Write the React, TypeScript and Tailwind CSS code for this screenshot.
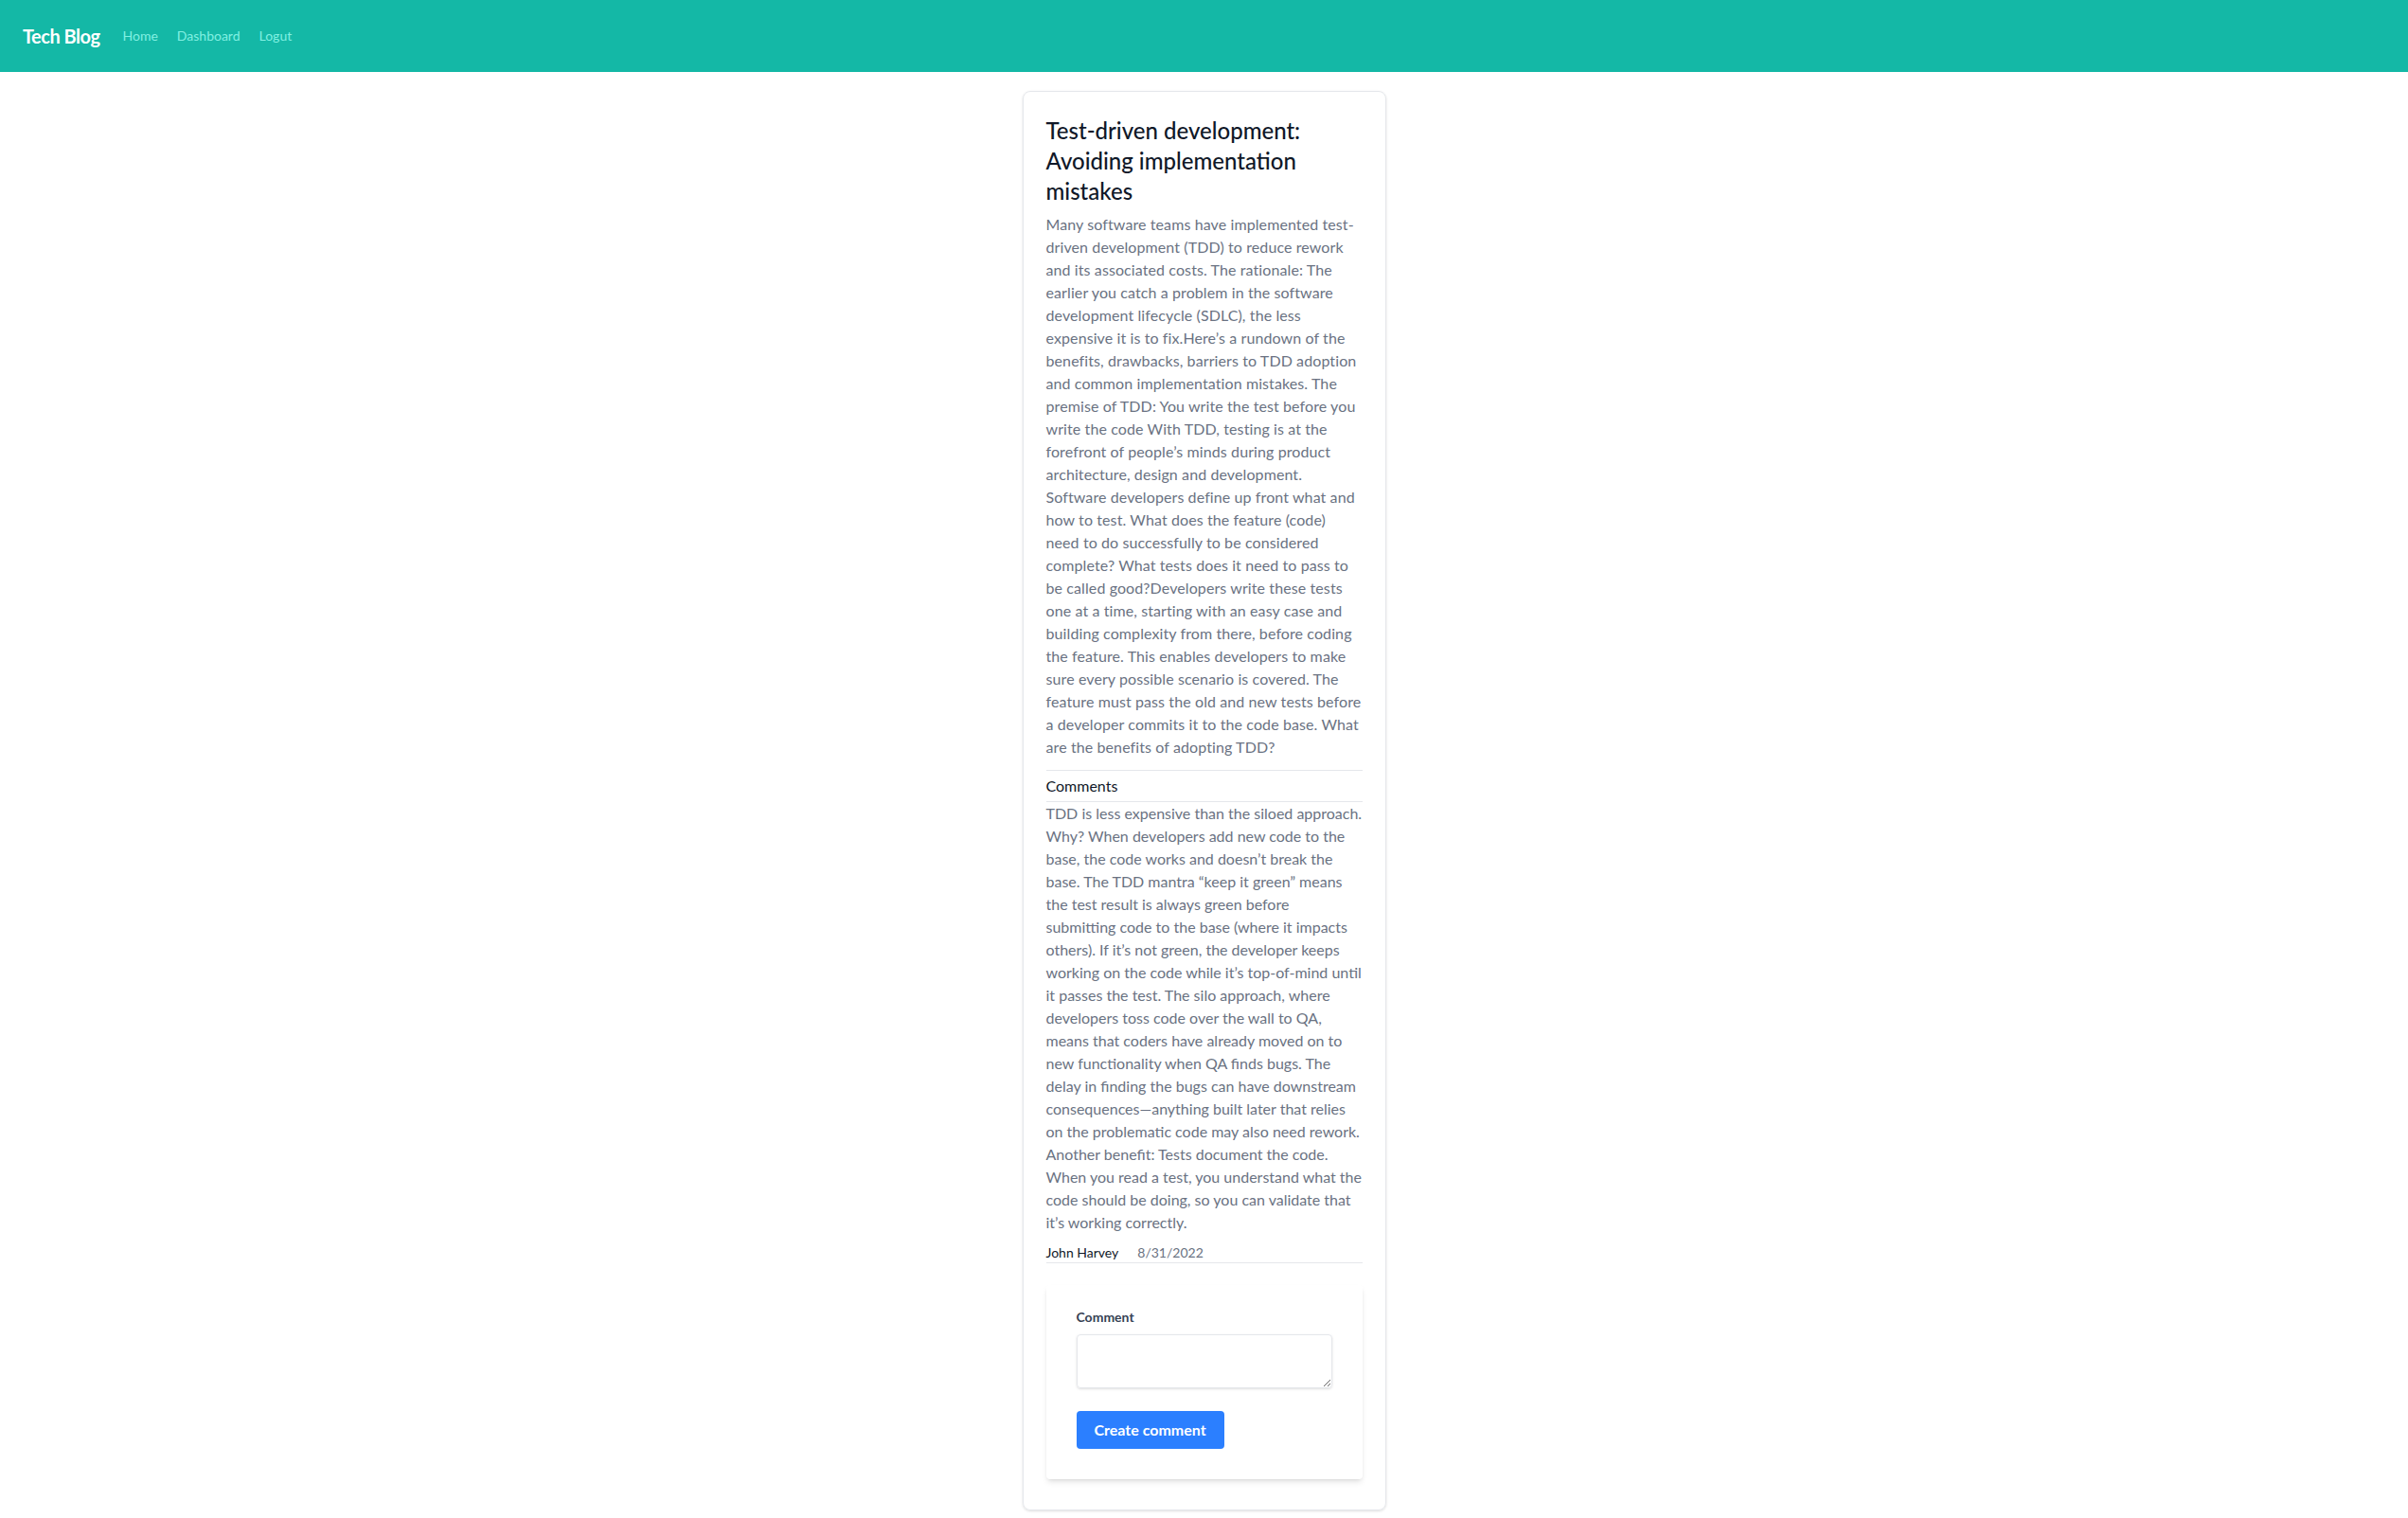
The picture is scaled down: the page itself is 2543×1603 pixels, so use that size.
import React from 'react';

const post = {
  title: 'Test-driven development: Avoiding implementation mistakes',
  body:
    "Many software teams have implemented test-driven development (TDD) to reduce rework and its associated costs. The rationale: The earlier you catch a problem in the software development lifecycle (SDLC), the less expensive it is to fix.Here\u2019s a rundown of the benefits, drawbacks, barriers to TDD adoption and common implementation mistakes. The premise of TDD: You write the test before you write the code With TDD, testing is at the forefront of people\u2019s minds during product architecture, design and development. Software developers define up front what and how to test. What does the feature (code) need to do successfully to be considered complete? What tests does it need to pass to be called good?Developers write these tests one at a time, starting with an easy case and building complexity from there, before coding the feature. This enables developers to make sure every possible scenario is covered. The feature must pass the old and new tests before a developer commits it to the code base. What are the benefits of adopting TDD?",
};

const comments = [
  {
    id: 1,
    text:
      "TDD is less expensive than the siloed approach. Why? When developers add new code to the base, the code works and doesn\u2019t break the base. The TDD mantra \u201ckeep it green\u201d means the test result is always green before submitting code to the base (where it impacts others). If it\u2019s not green, the developer keeps working on the code while it\u2019s top-of-mind until it passes the test. The silo approach, where developers toss code over the wall to QA, means that coders have already moved on to new functionality when QA finds bugs. The delay in finding the bugs can have downstream consequences\u2014anything built later that relies on the problematic code may also need rework. Another benefit: Tests document the code. When you read a test, you understand what the code should be doing, so you can validate that it\u2019s working correctly.",
    author: 'John Harvey',
    date: '8/31/2022',
  },
];

function Navbar() {
  return (
    <nav className="flex items-center bg-[#14b8a6] px-6 py-6">
      <a href="#" className="text-xl font-bold leading-7 tracking-tight text-white">
        Tech Blog
      </a>
      <div className="ml-6 flex gap-5 text-sm text-[#81f0e2]">
        <a href="#">Home</a>
        <a href="#">Dashboard</a>
        <a href="#">Logut</a>
      </div>
    </nav>
  );
}

function CommentForm() {
  return (
    <form className="mb-2 mt-[23px] rounded bg-white px-8 pb-8 pt-6 shadow-md">
      <label htmlFor="comment" className="mb-2 block text-sm font-bold text-gray-700">
        Comment
      </label>
      <textarea
        id="comment"
        className="mb-6 block h-[57px] w-full rounded border border-gray-200 px-3 py-2 text-gray-700 shadow focus:outline-none"
      />
      <button
        type="button"
        className="rounded bg-blue-500 px-[19px] py-2 font-bold text-white hover:bg-blue-700"
      >
        Create comment
      </button>
    </form>
  );
}

export default function App() {
  return (
    <div className="min-h-screen bg-white font-['Segoe_UI',Lato,'Noto_Sans',sans-serif] text-gray-900">
      <Navbar />
      <main className="mt-5 flex justify-center">
        <article className="w-96 rounded-lg border border-gray-200 p-6 shadow-sm">
          <h1 className="mt-px text-2xl font-medium text-gray-900">{post.title}</h1>
          <p className="mt-[7px] text-base tracking-[0.1px] text-gray-500">{post.body}</p>

          <h2 className="mt-3 border-y border-gray-200 py-1 text-base text-gray-900">Comments</h2>

          {comments.map((c) => (
            <div key={c.id} className="border-b border-gray-200">
              <p className="text-base text-gray-500">{c.text}</p>
              <div className="mt-2.5 flex gap-5 text-sm">
                <span className="text-gray-900">{c.author}</span>
                <span className="text-gray-500">{c.date}</span>
              </div>
            </div>
          ))}

          <CommentForm />
        </article>
      </main>
    </div>
  );
}
